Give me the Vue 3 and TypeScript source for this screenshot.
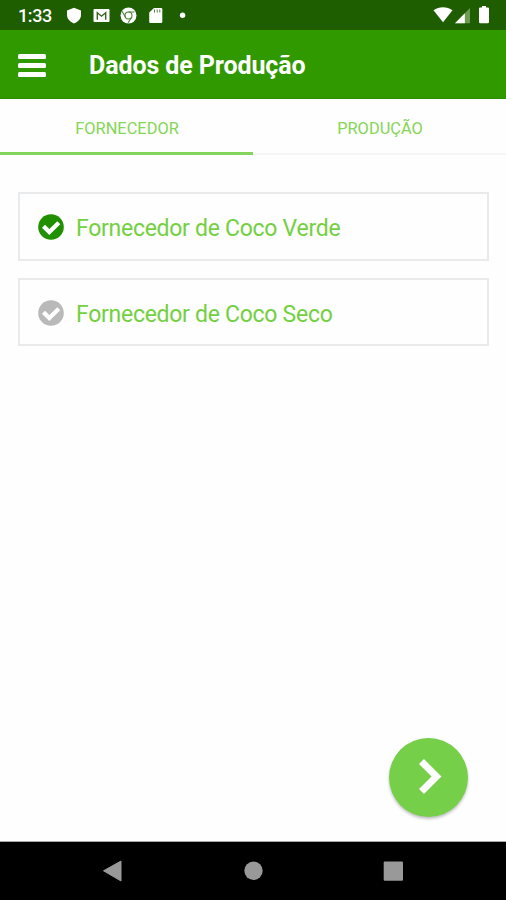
<script setup lang="ts">
import { ref } from 'vue'

interface Supplier {
  id: string
  label: string
}

const tabs: string[] = ['FORNECEDOR', 'PRODUÇÃO']
const activeTab = ref(0)
const suppliers: Supplier[] = [
  { id: 'verde', label: 'Fornecedor de Coco Verde' },
  { id: 'seco', label: 'Fornecedor de Coco Seco' },
]
const selected = ref('verde')
</script>

<template>
  <div class="screen">
    <div class="status">
      <span class="clock">1:33</span>
      <svg class="notifications" width="124" height="30" viewBox="66 0 124 30">
        <path d="M74 7.7 81 10.5V15c0 4-3 6.800-7 8.500-4-1.700-7-4.500-7-8.500v-4.500z" fill="#fff" />
        <rect x="93.500" y="9" width="16" height="13" rx="1" fill="#fff" />
        <path d="M97.300 19.800v-7l4.200 3.400 4.200-3.400v7" fill="none" stroke="#37621e" stroke-width="1.400" />
        <circle cx="128.500" cy="15.500" r="8" fill="#fff" />
        <circle cx="128.500" cy="15.500" r="3.500" fill="none" stroke="#4d8038" stroke-width="1.100" />
        <path d="M128.500 12h6M125.500 17.300l-3.500-6M131.500 17.500l-3.400 5.300" stroke="#4d8038" stroke-width="1.100" />
        <path d="M154 8h7q1.300 0 1.300 1.300v12.400q0 1.300-1.300 1.300h-10.500q-1.300 0-1.300-1.300V12.500z" fill="#fff" />
        <path d="M154.500 9.500v3M157.200 9.500v3M159.800 9.500v3" stroke="#56803f" stroke-width="1" />
        <circle cx="182.600" cy="15.300" r="2.700" fill="#fff" />
      </svg>
      <svg class="signals" width="60" height="30" viewBox="430 0 60 30">
        <path d="M433.500 10.200c5.500-4 13.500-4 19 0L443 22.300z" fill="#fff" />
        <path d="M470 8v15.200h-15z" fill="#6d9b52" />
        <path d="M464.800 13.300v9.900H455z" fill="#fff" />
        <path d="M482 7.500V6h4v1.500h2q1 0 1 1V22q0 1.300-1.300 1.300h-7.400Q479 23.300 479 22V8.500q0-1 1-1z" fill="#fff" />
      </svg>
    </div>
    <header class="bar">
      <button class="menu" aria-label="Menu"><i></i><i></i><i></i></button>
      <h1 class="title">Dados de Produção</h1>
    </header>
    <nav class="tabs">
      <button
        v-for="(tab, i) in tabs"
        :key="tab"
        class="tab"
        :class="{ active: i === activeTab }"
        @click="activeTab = i"
      ><span>{{ tab }}</span></button>
    </nav>
    <main class="content">
      <div
        v-for="item in suppliers"
        :key="item.id"
        class="card"
        :class="{ chosen: item.id === selected }"
        @click="selected = item.id"
      >
        <svg class="check" width="26" height="26" viewBox="0 0 26 26">
          <circle cx="13" cy="13" r="12.800" />
          <path d="m5.500 12.300 5.800 5.800L20.800 8.800" fill="none" stroke="#fff" stroke-width="4.300" />
        </svg>
        <span class="label">{{ item.label }}</span>
      </div>
      <button class="next" aria-label="Avançar">
        <svg width="79" height="79" viewBox="0 0 79 79">
          <path d="M32.500 23.500 47.500 38.500 32.500 53.500" fill="none" stroke="#fff" stroke-width="7" />
        </svg>
      </button>
    </main>
    <footer class="system">
      <svg width="506" height="58" viewBox="0 842 506 58" fill="#999">
        <path d="M103.500 870.800 121 861v20z" stroke="#999" stroke-width="1" stroke-linejoin="round" />
        <circle cx="253.500" cy="870.800" r="9.200" />
        <rect x="383.700" y="861.500" width="19.300" height="19.300" rx="1" />
      </svg>
    </footer>
  </div>
</template>

<style>
body {
  margin: 0;
}
</style>

<style scoped>
.screen {
  width: 506px;
  height: 900px;
  display: flex;
  flex-direction: column;
  overflow: hidden;
  background: #fefefe;
  font-family: Roboto, "Liberation Sans", sans-serif;
}
button {
  border: 0;
  padding: 0;
  background: none;
  font: inherit;
}
svg {
  display: block;
}
.status {
  height: 30px;
  flex: none;
  display: flex;
  align-items: center;
  background: #1e5d00;
  color: #fff;
}
.clock {
  width: 48px;
  padding-left: 18px;
  padding-top: 2px;
  font-size: 18px;
  line-height: 28px;
  font-weight: 500;
  letter-spacing: -0.4px;
}
.signals {
  margin-left: auto;
  margin-right: 16px;
}
.bar {
  box-sizing: border-box;
  height: 69px;
  flex: none;
  display: flex;
  align-items: center;
  padding-left: 18px;
  background: #309900;
  border-bottom: 1px solid #279000;
}
.menu {
  width: 28px;
  display: flex;
  flex-direction: column;
  gap: 4px;
  margin-top: 3px;
}
.menu i {
  height: 5px;
  border-radius: 1.5px;
  background: #fff;
}
.title {
  margin: 4px 0 0 43px;
  font-size: 25px;
  line-height: 30px;
  font-weight: 700;
  letter-spacing: -0.1px;
  color: #fff;
  white-space: nowrap;
}
.tabs {
  height: 56px;
  flex: none;
  display: flex;
}
.tab {
  box-sizing: border-box;
  flex: 1;
  display: flex;
  align-items: center;
  justify-content: center;
  padding-top: 5px;
  padding-left: 1px;
  font-size: 16.4px;
  font-weight: 400;
  color: #84d655;
  border-bottom: 2px solid #f6f6f6;
}
.tab.active {
  border-bottom: 3px solid #83d35c;
}
.content {
  flex: 1;
  display: flex;
  flex-direction: column;
  padding: 37px 17px 25px 18px;
}
.card {
  box-sizing: border-box;
  height: 69px;
  flex: none;
  display: flex;
  align-items: center;
  padding-left: 18px;
  margin-bottom: 17px;
  border: 2px solid #e9eaeb;
}
.card:nth-of-type(2) {
  height: 68px;
  padding-top: 1px;
}
.check {
  fill: #b9b9b9;
}
.chosen .check {
  fill: #209000;
}
.label {
  margin-left: 12px;
  padding-top: 5px;
  font-size: 23px;
  line-height: 28px;
  font-weight: 400;
  letter-spacing: -0.28px;
  color: #73d041;
  white-space: nowrap;
}
.next {
  width: 79px;
  height: 79px;
  margin-top: auto;
  margin-right: 21px;
  align-self: flex-end;
  border-radius: 50%;
  background: #76cf48;
  box-shadow: 0 2px 3px rgba(0, 0, 0, 0.25);
}
.system {
  height: 58px;
  flex: none;
  background: #000;
  box-shadow: 0 -1px 0 #aaa;
}
</style>
